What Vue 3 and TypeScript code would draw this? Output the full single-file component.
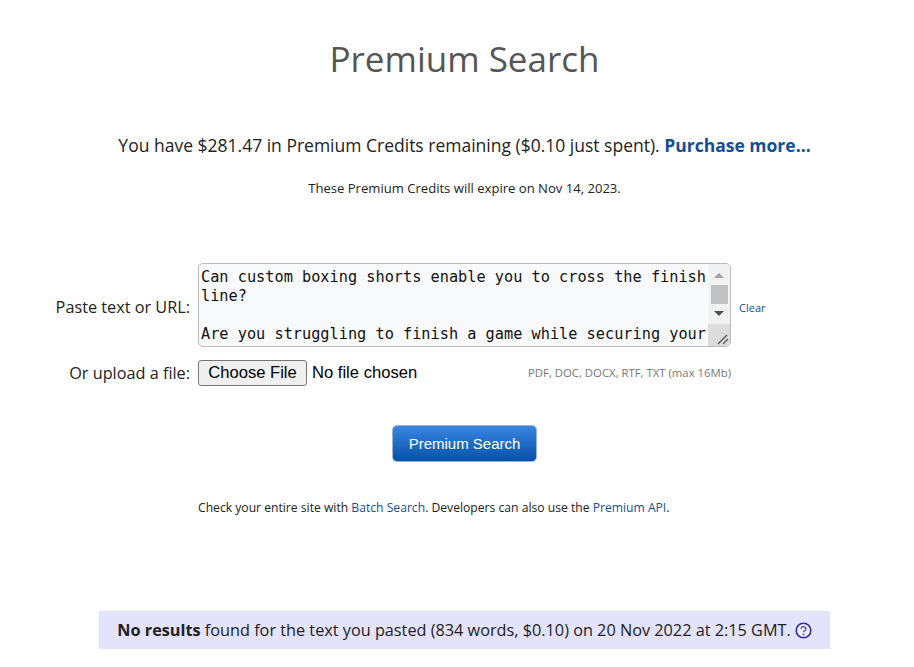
<script setup lang="ts">
const pasted =
  'Can custom boxing shorts enable you to cross the finish line?\n\nAre you struggling to finish a game while securing your'
</script>

<template>
  <div class="page">
    <h1 class="title">Premium Search</h1>
    <p class="credits">
      You have $281.47 in Premium Credits remaining ($0.10 just spent).
      <a class="more" href="#">Purchase more...</a>
    </p>
    <p class="expiry">These Premium Credits will expire on Nov 14, 2023.</p>

    <form class="form" @submit.prevent>
      <label class="label label-paste">Paste text or URL:</label>
      <div class="text-box">
        <textarea class="text-input" :value="pasted" spellcheck="false"></textarea>
        <!-- scrollbar drawn by hand so it looks the same everywhere -->
        <div class="scrollbar">
          <span class="arrow up"></span>
          <span class="thumb"></span>
          <span class="arrow down"></span>
          <span class="corner">
            <svg width="14" height="14" viewBox="0 0 14 14">
              <path d="M2 12 L11 3 M7 12 L12 7" stroke="#555" stroke-width="1.3" fill="none" />
            </svg>
          </span>
        </div>
      </div>
      <a class="clear" href="#">Clear</a>

      <label class="label">Or upload a file:</label>
      <div class="upload">
        <input class="file" type="file" />
        <span class="formats">PDF, DOC, DOCX, RTF, TXT (max 16Mb)</span>
      </div>
    </form>

    <div class="actions">
      <button class="submit" type="button">Premium Search</button>
    </div>

    <p class="note">
      Check your entire site with <a href="#">Batch Search</a>. Developers can also use the
      <a href="#">Premium API</a>.
    </p>

    <div class="result">
      <span><b>No results</b> found for the text you pasted (834 words, $0.10) on 20 Nov 2022 at 2:15 GMT.</span>
      <svg class="help" width="17" height="17" viewBox="0 0 17 17">
        <circle cx="8.5" cy="8.5" r="7.3" fill="#eeeeff" stroke="#2f2fa8" stroke-width="1.6" />
        <path d="M6.2 6.8 a2.3 2.2 0 1 1 3.6 1.8 c-.9 .5 -1.3 .9 -1.3 1.7" fill="none" stroke="#5555bb" stroke-width="1.5" />
        <circle cx="8.5" cy="12.4" r="1" fill="#5555bb" />
      </svg>
    </div>
  </div>
</template>

<style>
body {
  background: #fff;
}
</style>

<style scoped>
.page {
  width: 914px;
  height: 667px;
  overflow: hidden;
  font-family: "Open Sans", "Liberation Sans", sans-serif;
  color: #222;
  padding: 0 1px 0 16px;
  box-sizing: border-box;
  display: flex;
  flex-direction: column;
  align-items: center;
}

.title {
  margin: 36px 0 0;
  font-size: 35px;
  line-height: 46px;
  font-weight: 400;
  color: #555;
}

.credits {
  margin: 50px 0 0;
  font-size: 17.5px;
  line-height: 26px;
}

.more {
  color: #134f94;
  font-weight: 700;
  text-decoration: none;
}

.expiry {
  margin: 21px 0 0;
  font-size: 13.08px;
  line-height: 18px;
}

.form {
  align-self: flex-start;
  margin: 66px 0 0 24px;
  display: grid;
  grid-template-columns: 150px 533px auto;
  column-gap: 8px;
  row-gap: 13px;
  align-items: center;
}

.label {
  font-size: 16.25px;
  text-align: right;
}

.label-paste {
  margin-top: 4px;
}

.text-box {
  position: relative;
  height: 84px;
  box-sizing: border-box;
  border: 1px solid #bbb;
  border-radius: 5px;
  overflow: hidden;
  background: #f8f9fa;
}

.text-input {
  display: block;
  width: 100%;
  height: 100%;
  box-sizing: border-box;
  border: 0;
  outline: 0;
  resize: none;
  overflow: hidden;
  margin: 0;
  padding: 4px 18px 0 2px;
  background: transparent;
  color: #111;
  font-family: "DejaVu Sans Mono", "Liberation Mono", monospace;
  font-size: 15.25px;
  line-height: 19px;
}

.scrollbar {
  position: absolute;
  top: 0;
  right: 0;
  bottom: 0;
  width: 21px;
  background: #f1f1f1;
}

.thumb {
  position: absolute;
  top: 21px;
  left: 2px;
  width: 17px;
  height: 19px;
  background: #c1c1c1;
}

.arrow {
  position: absolute;
  left: 5px;
  width: 0;
  height: 0;
  border-left: 5px solid transparent;
  border-right: 5px solid transparent;
}

.arrow.up {
  top: 9px;
  border-bottom: 5px solid #a3a3a3;
}

.arrow.down {
  top: 47px;
  border-top: 5px solid #505050;
}

.corner {
  position: absolute;
  right: 0;
  bottom: 0;
  width: 22px;
  height: 22px;
  background: #dcdcdc;
  display: flex;
  align-items: flex-end;
  justify-content: flex-end;
}

.clear {
  margin-top: 4px;
  font-size: 11px;
  color: #134f94;
  text-decoration: none;
}

.upload {
  display: flex;
  align-items: center;
  justify-content: space-between;
  height: 26px;
}

.file {
  font-family: "Liberation Sans", Arial, sans-serif;
  font-size: 16.6px;
  color: #000;
  width: 260px;
}

.file::file-selector-button {
  font: inherit;
  width: 109px;
  height: 26px;
  margin-right: 5px;
  padding: 0;
  border: 1px solid #767676;
  border-radius: 3px;
  background: #efefef;
  color: #000;
}

.formats {
  margin-top: -2px;
  font-size: 11.35px;
  color: #777;
}

.actions {
  margin-top: 39px;
}

.submit {
  display: block;
  width: 145px;
  height: 37px;
  box-sizing: border-box;
  border: 1px solid #9fb4cc;
  border-radius: 5px;
  background: linear-gradient(#3a86e2, #0650a8);
  color: #fff;
  font-family: "Liberation Sans", Arial, sans-serif;
  font-size: 15px;
}

.note {
  align-self: flex-start;
  margin: 38px 0 0 182px;
  font-size: 12.15px;
  line-height: 16px;
}

.note a {
  color: #134f94;
  text-decoration: none;
}

.result {
  margin-top: 95px;
  width: 731px;
  height: 38px;
  box-sizing: border-box;
  background: #e3e3fc;
  font-size: 16.25px;
  display: flex;
  align-items: center;
  justify-content: center;
  gap: 4px;
}

.help {
  flex: none;
}
</style>
